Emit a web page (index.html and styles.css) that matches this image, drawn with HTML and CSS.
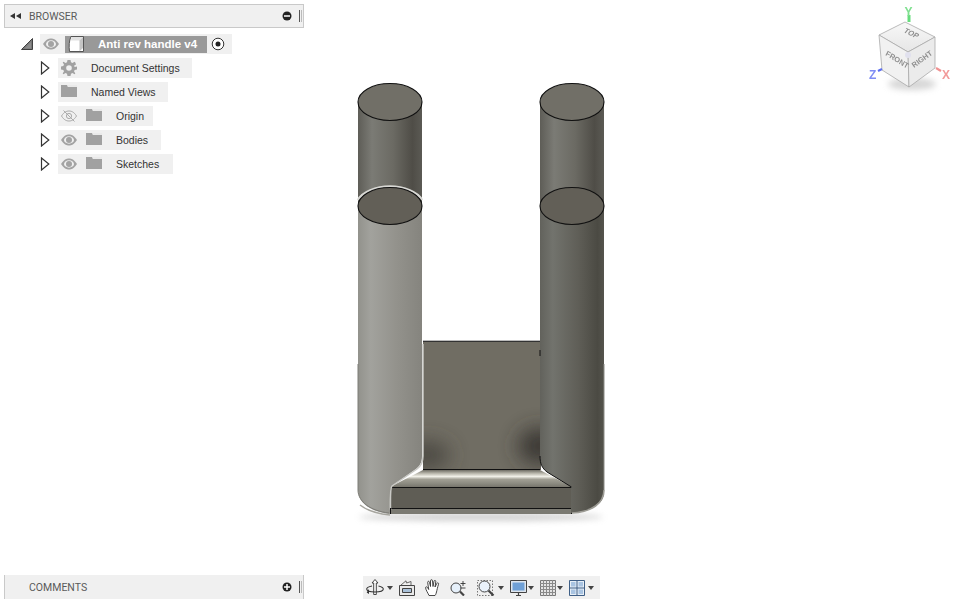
FILE: index.html
```html
<!DOCTYPE html>
<html lang="en">
<head>
<meta charset="utf-8">
<title>Anti rev handle v4</title>
<link rel="stylesheet" href="styles.css">
</head>
<body>
<svg class="defs" width="0" height="0" aria-hidden="true">
  <defs>
    <symbol id="eye" viewBox="0 0 16 12"><path d="M0 6C3 1.500 5.500 .5 8 .5S13 1.500 16 6C13 10.500 10.500 11.500 8 11.500S3 10.500 0 6Z" fill="#a3a3a3"/><ellipse cx="8" cy="6" rx="5" ry="3.700" fill="#f0f0f0"/><circle cx="8" cy="6" r="3" fill="#a3a3a3"/></symbol>
    <symbol id="eye-off" viewBox="0 0 16 12"><path d="M.5 6C3 2 5.500 1 8 1S13 2 15.500 6C13 10 10.500 11 8 11S3 10 .5 6Z" fill="none" stroke="#aaa"/><circle cx="8" cy="6" r="2.600" fill="none" stroke="#aaa"/><path d="M2.500 .5L13.500 11.500" stroke="#aaa" fill="none"/></symbol>
    <symbol id="folder" viewBox="0 0 16 12"><path d="M0 0H6L7 2H16V12H0Z" fill="#a1a1a1"/><path d="M6.500 1H16" stroke="#e4e4e4" fill="none"/></symbol>
    <symbol id="caret" viewBox="0 0 6 4"><path d="M0 0H6L3 4Z" fill="#444"/></symbol>
    <linearGradient id="cylBack" x1="0" x2="1" y1="0" y2="0"><stop offset="0" stop-color="#5e5d57"/><stop offset=".22" stop-color="#7b7b75"/><stop offset=".55" stop-color="#6b6a63"/><stop offset=".85" stop-color="#4f4d47"/><stop offset="1" stop-color="#5b5a54"/></linearGradient>
    <linearGradient id="cylLight" x1="0" x2="1" y1="0" y2="0"><stop offset="0" stop-color="#92928c"/><stop offset=".2" stop-color="#a2a29d"/><stop offset=".6" stop-color="#93928c"/><stop offset="1" stop-color="#85847e"/></linearGradient>
    <linearGradient id="cylDark" x1="0" x2="1" y1="0" y2="0"><stop offset="0" stop-color="#62625c"/><stop offset=".2" stop-color="#72736d"/><stop offset=".6" stop-color="#5f5e57"/><stop offset=".9" stop-color="#4b4a43"/><stop offset="1" stop-color="#55544d"/></linearGradient>
    <linearGradient id="ledge" x1="0" x2="0" y1="0" y2="1"><stop offset="0" stop-color="#6f6d64"/><stop offset=".2" stop-color="#b9b7ac"/><stop offset=".38" stop-color="#f1f0e8"/><stop offset=".55" stop-color="#a19f94"/><stop offset=".8" stop-color="#8b8a80"/><stop offset="1" stop-color="#77756c"/></linearGradient>
    <linearGradient id="cubeTop" x1="0" x2="0" y1="0" y2="1"><stop offset="0" stop-color="#f8f8f8"/><stop offset="1" stop-color="#e6e6e6"/></linearGradient>
    <filter id="blur10" x="-100%" y="-100%" width="300%" height="300%"><feGaussianBlur stdDeviation="10"/></filter>
    <filter id="blur3" x="-30%" y="-100%" width="160%" height="300%"><feGaussianBlur stdDeviation="3"/></filter>
    <filter id="soft" x="-10%" y="-10%" width="120%" height="120%"><feGaussianBlur stdDeviation=".5"/></filter>
    <clipPath id="plateClip"><rect x="423" y="342" width="118" height="128"/></clipPath>
  </defs>
</svg>

<main class="app">
  <section class="panel panel-browser">
    <header class="panel-head">
      <svg class="collapse" width="11" height="6" viewBox="0 0 11 6"><path d="M5 0V6L0 3ZM11 0V6L6 3Z" fill="#333"/></svg>
      <span class="panel-title">BROWSER</span>
      <span class="round-btn"><svg width="10" height="10" viewBox="0 0 10 10"><circle cx="5" cy="5" r="4.500" fill="#222"/><path d="M2 5H8" stroke="#fff" stroke-width="1.500"/></svg></span>
      <span class="grip"></span>
    </header>
    <ul class="tree">
      <li class="tree-row tree-root">
        <svg class="root-toggle" width="12" height="12" viewBox="0 0 12 12"><path d="M11.500 .5V11.500H.5Z" fill="#777" stroke="#222" stroke-width=".8"/><path d="M10 4V10.500H3.500Z" fill="#8d8d8d"/></svg>
        <div class="pill root-pill">
          <svg class="ic-eye root-eye"><use href="#eye"/></svg>
          <div class="root-name">
            <svg class="root-cube" width="16" height="16" viewBox="0 0 16 16"><path d="M3 .5H15.500V15.500H1.500C.8 10 1 5 3 .5Z" fill="#fff" stroke="#555"/><path d="M3.500 1H15L11.500 4.500H3Z" fill="#e2e2e2"/><path d="M11.500 4.500L15 1V12L11.500 15.200Z" fill="#c4c4c4"/></svg>
            <span class="root-label">Anti rev handle v4</span>
          </div>
          <svg class="radio" width="14" height="14" viewBox="0 0 14 14"><circle cx="7" cy="7" r="5.800" fill="#fff" stroke="#333"/><circle cx="7" cy="7" r="2.500" fill="#222"/></svg>
        </div>
      </li>
      <li class="tree-row">
        <svg class="toggle" width="11" height="14" viewBox="0 0 11 14"><path d="M1.500 1V13L8.800 7Z" fill="#fff" stroke="#333" stroke-width="1.200"/></svg>
        <div class="pill pill-document">
          <svg class="ic-gear" width="16" height="16" viewBox="0 0 16 16"><path fill="#a1a1a1" fill-rule="evenodd" d="M6.500 0H9.500L10 2.300L11.500 3L13.500 1.700L14.300 2.500L14.300 2.500L15 4.500L13 5.700L13.700 7L16 6.500V9.500L13.700 10L13 11.300L14.300 13.500L13.500 14.300L11.500 13L10 13.700L9.500 16H6.500L6 13.700L4.500 13L2.500 14.300L1.700 13.500L3 11.300L2.300 10L0 9.500V6.500L2.300 6L3 4.500L1.700 2.500L2.500 1.700L4.500 3L6 2.300ZM8 5.200A2.800 2.800 0 1 0 8 10.800A2.800 2.800 0 1 0 8 5.200Z"/></svg>
          <span class="label">Document Settings</span>
        </div>
      </li>
      <li class="tree-row">
        <svg class="toggle" width="11" height="14" viewBox="0 0 11 14"><path d="M1.500 1V13L8.800 7Z" fill="#fff" stroke="#333" stroke-width="1.200"/></svg>
        <div class="pill pill-views">
          <svg class="ic-folder"><use href="#folder"/></svg>
          <span class="label">Named Views</span>
        </div>
      </li>
      <li class="tree-row">
        <svg class="toggle" width="11" height="14" viewBox="0 0 11 14"><path d="M1.500 1V13L8.800 7Z" fill="#fff" stroke="#333" stroke-width="1.200"/></svg>
        <div class="pill pill-origin">
          <svg class="ic-eye"><use href="#eye-off"/></svg>
          <svg class="ic-folder ic-folder-2"><use href="#folder"/></svg>
          <span class="label">Origin</span>
        </div>
      </li>
      <li class="tree-row">
        <svg class="toggle" width="11" height="14" viewBox="0 0 11 14"><path d="M1.500 1V13L8.800 7Z" fill="#fff" stroke="#333" stroke-width="1.200"/></svg>
        <div class="pill pill-bodies">
          <svg class="ic-eye"><use href="#eye"/></svg>
          <svg class="ic-folder ic-folder-2"><use href="#folder"/></svg>
          <span class="label">Bodies</span>
        </div>
      </li>
      <li class="tree-row">
        <svg class="toggle" width="11" height="14" viewBox="0 0 11 14"><path d="M1.500 1V13L8.800 7Z" fill="#fff" stroke="#333" stroke-width="1.200"/></svg>
        <div class="pill pill-sketches">
          <svg class="ic-eye"><use href="#eye"/></svg>
          <svg class="ic-folder ic-folder-2"><use href="#folder"/></svg>
          <span class="label">Sketches</span>
        </div>
      </li>
    </ul>
  </section>

  <svg class="model" width="300" height="460" viewBox="340 70 300 460" aria-label="3D model">
    <ellipse cx="481" cy="517" rx="122" ry="4" fill="#aaa" opacity=".55" filter="url(#blur3)"/>
    <!-- back cylinders -->
    <path d="M358 102H422V300H358Z" fill="url(#cylBack)"/>
    <path d="M540 102H604V300H540Z" fill="url(#cylBack)"/>
    <ellipse cx="390" cy="102" rx="32" ry="18.500" fill="#716f67" stroke="#111" stroke-width="1.100"/>
    <ellipse cx="572" cy="102" rx="32" ry="18.500" fill="#716f67" stroke="#111" stroke-width="1.100"/>
    <!-- back plate -->
    <rect x="423" y="341" width="118" height="129" fill="#706d63"/>
    <g clip-path="url(#plateClip)">
      <ellipse cx="426" cy="455" rx="24" ry="14" fill="#3f3d37" opacity=".75" filter="url(#blur10)"/>
      <ellipse cx="540" cy="446" rx="22" ry="18" fill="#35332e" opacity=".9" filter="url(#blur10)"/>
    </g>
    <path d="M423 341.500H540" stroke="#333" stroke-width="1"/>
    <path d="M423 340.500H540" stroke="#bbb" stroke-width="1"/>
    <!-- ledge + front face -->
    <path d="M423 470H540L572 487H390Z" fill="url(#ledge)"/>
    <path d="M390 487H572V508H390Z" fill="#5f5d55"/>
    <path d="M390 508H572V514H390Z" fill="#7b7a72"/>
    <path d="M423 469.500H540M390 487.500H572M390 508.500H572M571.500 487V514" stroke="#111" stroke-width="1" fill="none"/>
    <!-- right front cylinder -->
    <path d="M540 205H604V493C604 503 592 512 571 513V487L547 472C542 468 540 464 540 456Z" fill="url(#cylDark)"/>
    <path d="M540 456C540 464 542 468 547 472L571.500 487" fill="none" stroke="#111"/>
    <path d="M540 350V356" stroke="#111"/>
    <path d="M604 364V490" stroke="#8a8a84" fill="none"/>
    <path d="M604 490C604 503 592 512 572 513" stroke="#9c9b94" stroke-width="1.600" fill="none"/>
    <ellipse cx="572" cy="206" rx="32" ry="18.500" fill="#625f57" stroke="#111" stroke-width="1.100"/>
    <!-- left front cylinder -->
    <path d="M358 205H422V456C422 462 420 466 416 469L392 486C390 488 390 492 390 514C372 512 358 504 358 490Z" fill="url(#cylLight)"/>
    <path d="M358 200C362 192 376 186.500 390 186.500C404 186.500 418 192 422 200" fill="none" stroke="#d8d8d4" stroke-width="2.400"/>
    <path d="M423 344V456C423 462 421 466 417 469L392 486C390 488 390.500 495 390.500 510" fill="none" stroke="#c9c9c5" stroke-width="1.500"/>
    <path d="M358 364V490C358 502 371 511 389 513" fill="none" stroke="#7d7c76"/>
    <path d="M360 505C368 511 378 514 390 515" fill="none" stroke="#a6a59e" stroke-width="1.500"/>
    <path d="M390.500 508V514" stroke="#111"/>
    <ellipse cx="390" cy="206" rx="32" ry="18.500" fill="#625f57" stroke="#111" stroke-width="1.100"/>
  </svg>

  <svg class="viewcube" width="94" height="96" viewBox="0 0 94 96" aria-label="View cube">
    <g transform="translate(-868 0)">
      <ellipse cx="912" cy="84" rx="24" ry="6" fill="#bbb" opacity=".6" filter="url(#blur3)"/>
      <path d="M879 35L905 22L935 37L908 52Z" fill="url(#cubeTop)" stroke="#aaa" stroke-width=".8"/>
      <path d="M879 35L908 52L909 87L882 70Z" fill="#f1f1f1" stroke="#aaa" stroke-width=".8"/>
      <path d="M908 52L935 37L935 68L909 87Z" fill="#ebebeb" stroke="#aaa" stroke-width=".8"/>
      <circle cx="908" cy="55" r="3" fill="#e1e1ee"/>
      <path d="M909 15V22" stroke="#66dc7c" stroke-width="3"/>
      <path d="M882 69L878 71" stroke="#5c6ef0" stroke-width="2.200"/>
      <path d="M936 68L941 71" stroke="#f09292" stroke-width="2.200"/>
      <g filter="url(#soft)">
        <text class="axis axis-y" x="904.500" y="16">Y</text>
        <text class="axis axis-z" x="869" y="79">Z</text>
        <text class="axis axis-x" x="942" y="79">X</text>
        <text class="face" transform="translate(903 32) rotate(26) skewX(-12)">TOP</text>
        <text class="face" transform="translate(885 55) rotate(28) skewY(4)">FRONT</text>
        <text class="face" transform="translate(914 68) rotate(-36)">RIGHT</text>
      </g>
    </g>
  </svg>

  <footer class="bottom">
    <section class="panel panel-comments">
      <header class="panel-head panel-head-comments">
        <span class="panel-title">COMMENTS</span>
        <span class="round-btn"><svg width="10" height="10" viewBox="0 0 10 10"><circle cx="5" cy="5" r="4.500" fill="#222"/><path d="M2 5H8M5 2V8" stroke="#fff" stroke-width="1.500"/></svg></span>
        <span class="grip"></span>
      </header>
    </section>
    <nav class="toolbar">
      <svg class="tool t-orbit" width="18" height="17" viewBox="0 0 18 17"><path d="M9 .5L12 4H10.300V15.500H7.700V4H6Z" fill="#fff" stroke="#333" stroke-width=".9"/><path d="M6 7C2.500 7.700 .7 8.800 .7 10C.7 11.800 4 13 9 13C13.500 13 17.300 11.800 17.300 10C17.300 8.800 15.500 7.700 12.500 7" fill="none" stroke="#333" stroke-width="1.100"/><path d="M3 10V15L.7 13.500Z" fill="#333"/></svg>
      <svg class="caret"><use href="#caret"/></svg>
      <svg class="tool t-look" width="16" height="16" viewBox="0 0 16 16"><path d="M.5 5.500H15.500V15.500H.5Z" fill="#e9e9e9" stroke="#444"/><path d="M3.500 8.500H12.500V12.500H3.500Z" fill="#a9c1d9" stroke="#444"/><path d="M2 5L7 .8L7.500 3L12 1.500V5" fill="none" stroke="#666"/></svg>
      <svg class="tool t-hand" width="16" height="17" viewBox="0 0 16 17"><path d="M4 16.500C3 14 .7 11 .6 8.700C.6 7.500 2 7.500 2.700 8.700L3.700 10.500L2.700 3.500C2.500 2 4.200 1.800 4.500 3.300L5.500 7.500L5.500 1.800C5.500 .3 7.500 .3 7.500 1.800L8 7.500L9 2.300C9.300 .9 11 1.200 10.800 2.700L10 8L11.800 4.500C12.500 3.200 14 3.800 13.500 5.200C12.500 8.500 12 11 11.500 13C11 15 10.500 16 10 16.500Z" fill="#fff" stroke="#333" stroke-width=".9"/></svg>
      <svg class="tool t-zoom" width="18" height="16" viewBox="0 0 18 16"><circle cx="6" cy="8" r="5" fill="#e6f0fa" stroke="#444"/><path d="M10 11.500L14 15.500" stroke="#444" stroke-width="2.200"/><path d="M13 1V6M10.500 3.500H15.500M10.500 8H15.500" stroke="#333" stroke-width=".9"/></svg>
      <svg class="tool t-window" width="18" height="16" viewBox="0 0 18 16"><path d="M.5.5H15.500V15.500H.5Z" fill="none" stroke="#777" stroke-dasharray="1.500 1.500"/><circle cx="7.500" cy="6.500" r="5.500" fill="#eaf2fb" stroke="#444"/><path d="M11.500 10.500L16.500 15.500" stroke="#444" stroke-width="2.200"/></svg>
      <svg class="caret"><use href="#caret"/></svg>
      <svg class="tool t-display" width="17" height="16" viewBox="0 0 17 16"><path d="M.5.5H16.500V12.500H.5Z" fill="#dfe6ee" stroke="#444"/><path d="M2.500 2.500H14.500V10.500H2.500Z" fill="#6fa0d6"/><path d="M6 15.500H11M8.500 12.500V15.500" stroke="#444" stroke-width="1.200"/></svg>
      <svg class="caret caret-tight"><use href="#caret"/></svg>
      <svg class="tool t-grid" width="16" height="16" viewBox="0 0 16 16"><path d="M.5.5H15.500V15.500H.5Z" fill="#e4e4e4" stroke="#777"/><path d="M3.500 0V16M6.500 0V16M9.500 0V16M12.500 0V16M0 3.500H16M0 6.500H16M0 9.500H16M0 12.500H16" stroke="#8a8a8a"/></svg>
      <svg class="caret caret-tight"><use href="#caret"/></svg>
      <svg class="tool t-views" width="16" height="16" viewBox="0 0 16 16"><path d="M.5.5H15.500V15.500H.5Z" fill="#e6eef6" stroke="#3f5f86"/><path d="M8 0V16M0 8H16" stroke="#3f5f86"/><path d="M2 2H6.500V6.500H2ZM9.500 2H14V6.500H9.500ZM2 9.500H6.500V14H2ZM9.500 9.500H14V14H9.500Z" fill="#a9c4e2"/></svg>
      <svg class="caret"><use href="#caret"/></svg>
    </nav>
  </footer>
</main>
</body>
</html>
```
FILE: styles.css
```css
* { box-sizing: border-box; }
html, body { margin: 0; padding: 0; background: #fff; overflow: hidden; }
body { font-family: "Liberation Sans", Arial, sans-serif; font-size: 11px; color: #333; }
.defs { position: absolute; }
.app { position: relative; width: 962px; height: 599px; display: flex; flex-direction: column; justify-content: space-between; padding-top: 4px; }

.panel { width: 300px; margin-left: 4px; }
.panel-head { height: 24px; display: flex; align-items: center; background: #f0f0f0; border: 1px solid #c9c9c9; padding-left: 5px; }
.panel-head-comments { border-top: 0; border-bottom: 0; padding-left: 24px; }
.collapse { margin-right: 8px; flex: none; }
.panel-title { flex: 1; font-family: Roboto, "Liberation Sans", sans-serif; font-size: 10.500px; color: #5a5a5a; }
.round-btn { display: flex; width: 10px; height: 10px; margin-right: 7px; }
.grip { width: 3px; height: 12px; border-left: 1px solid #555; border-right: 1px solid #bbb; margin-right: 1px; }

.tree { list-style: none; margin: 6px 0 0; padding: 0; display: flex; flex-direction: column; gap: 4px; }
.tree-row { display: flex; align-items: center; height: 20px; padding-left: 36px; }
.toggle { flex: none; margin-right: 7px; }
.root-toggle { flex: none; margin-left: -19px; margin-right: 7px; }
.pill { height: 20px; display: flex; align-items: center; background: #f0f0f0; padding-left: 3px; }
.pill-document { width: 134px; }
.pill-views { width: 110px; }
.pill-origin { width: 95px; }
.pill-bodies { width: 103px; }
.pill-sketches { width: 115px; }
.label { font-size: 10.500px; color: #333; white-space: nowrap; margin-left: 14px; }
.ic-eye { width: 16px; height: 12px; flex: none; }
.ic-folder { width: 16px; height: 12px; flex: none; margin-bottom: 2px; }
.ic-folder-2 { margin-left: 9px; }
.ic-gear { flex: none; }
.root-pill { width: 192px; }
.root-eye { margin-right: 6px; }
.root-name { width: 142px; height: 17px; background: #999; display: flex; align-items: center; padding-left: 3px; }
.root-cube { flex: none; }
.root-label { font-weight: 700; font-size: 11.500px; color: #fff; margin-left: 14px; white-space: nowrap; }
.radio { margin-left: 4px; flex: none; }

.model { position: absolute; left: 340px; top: 70px; }
.viewcube { position: absolute; left: 868px; top: 0; }
.axis { font-family: "Liberation Sans", sans-serif; font-size: 12px; font-weight: 700; }
.axis-y { fill: #7fe08f; }
.axis-z { fill: #7f8df5; }
.axis-x { fill: #f29a9a; }
.face { font-family: "Liberation Sans", sans-serif; font-size: 7.500px; font-weight: 700; fill: #8f8f8f; }

.bottom { display: flex; align-items: flex-end; gap: 59px; }
.toolbar { width: 237px; height: 23px; background: #f0f0f0; display: flex; align-items: center; padding-left: 3px; }
.tool { flex: none; }
.caret { width: 6px; height: 4px; flex: none; margin-left: 3px; margin-right: 6px; }
.caret-tight { margin-left: 1px; }
.t-hand { margin: 0 9px 0 5px; }
.t-zoom { margin-right: 9px; }
.t-look { margin-right: 5px; }
```
